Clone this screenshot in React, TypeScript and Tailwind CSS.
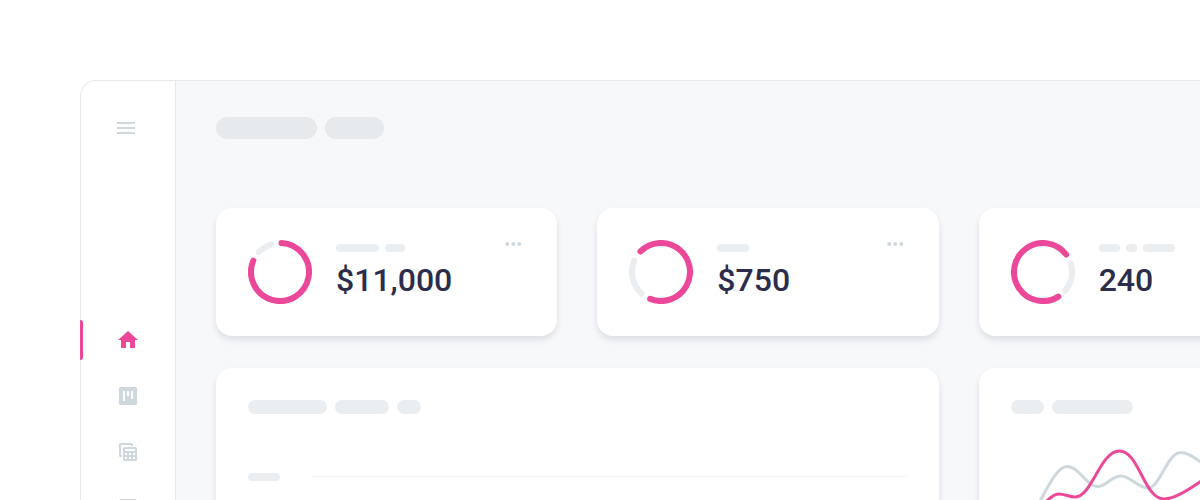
import type { ReactNode } from 'react';
import { MdHome, MdMenu } from 'react-icons/md';

type Arc = [start: number, end: number];

interface Metric {
  value: string;
  bars: string[];
  pink: Arc;
  gray: Arc;
}

const metrics: Metric[] = [
  { value: '$11,000', bars: ['w-[43px]', 'w-5'], pink: [3, 293], gray: [313, 343] },
  { value: '$750', bars: ['w-8'], pink: [-45, 202], gray: [222, 293] },
  { value: '240', bars: ['w-[21px]', 'w-[11px]', 'w-8'], pink: [148, 413], gray: [73, 130] },
];

// Angles are in degrees, clockwise from twelve o'clock.
function arcPath([start, end]: Arc) {
  const at = (deg: number) => {
    const a = (deg * Math.PI) / 180;
    return `${32 + 29 * Math.sin(a)} ${32 - 29 * Math.cos(a)}`;
  };
  return `M${at(start)}A29 29 0 ${end - start > 180 ? 1 : 0} 1 ${at(end)}`;
}

function Ring({ pink, gray }: { pink: Arc; gray: Arc }) {
  return (
    <svg className="size-16 shrink-0" viewBox="0 0 64 64" fill="none" strokeWidth="6" strokeLinecap="round" aria-hidden="true">
      <path d={arcPath(gray)} stroke="#eaeef1" />
      <path d={arcPath(pink)} stroke="#ec4899" />
    </svg>
  );
}

function Pills({ widths, className }: { widths: string[]; className: string }) {
  return (
    <div className="flex gap-2">
      {widths.map((w, i) => (
        <span key={i} className={`rounded-full ${className} ${w}`} />
      ))}
    </div>
  );
}

const surface = 'rounded-2xl bg-white shadow-[0_4px_6px_rgba(45,48,80,0.12)]';

function MetricCard({ value, bars, pink, gray }: Metric) {
  return (
    <article className={`flex items-center gap-6 p-8 ${surface}`}>
      <Ring pink={pink} gray={gray} />
      <div className="flex flex-1 flex-col gap-2">
        <div className="flex gap-[6px]">
          {bars.map((w, i) => (
            <span key={i} className={`h-2 rounded-full bg-[#eaeef1] ${w}`} />
          ))}
        </div>
        <p className="text-[32px] leading-10 font-medium text-[#2b2d4a]">{value}</p>
      </div>
      <button type="button" aria-label="More options" className="-mt-2 self-start">
        <svg className="size-6" viewBox="0 0 24 24" fill="#cfd8dc" aria-hidden="true">
          <circle cx="6.300" cy="12" r="2" />
          <circle cx="12.300" cy="12" r="2" />
          <circle cx="18.300" cy="12" r="2" />
        </svg>
      </button>
    </article>
  );
}

function NavItem({ label, active = false, children }: { label: string; active?: boolean; children: ReactNode }) {
  return (
    <a
      href="#"
      aria-label={label}
      className={`relative flex h-10 items-center justify-center ${active ? 'text-[#ec4899]' : 'text-[#cfd8dc]'}`}
    >
      {active && <span className="absolute inset-y-0 -left-px w-[3px] rounded-r-[3px] bg-[#ec4899]" />}
      {children}
    </a>
  );
}

function BoardIcon() {
  return (
    <svg className="size-6" viewBox="0 0 24 24" fill="currentColor" fillRule="evenodd" aria-hidden="true">
      <path d="M4.500 3h15A1.500 1.500 0 0 1 21 4.500v15a1.500 1.500 0 0 1-1.500 1.500h-15A1.500 1.500 0 0 1 3 19.500v-15A1.500 1.500 0 0 1 4.500 3zM7 7v10h2V7zM11 7v5h2V7zM15 7v8h2V7z" />
    </svg>
  );
}

function SheetsIcon() {
  return (
    <svg className="size-6" viewBox="0 0 24 24" fill="currentColor" fillRule="evenodd" aria-hidden="true">
      <path d="M4.500 3h11A1.500 1.500 0 0 1 17 4.500V6h-2V5H5v10h1v2H4.500A1.500 1.500 0 0 1 3 15.500v-11A1.500 1.500 0 0 1 4.500 3z" />
      <path d="M8.500 7h11A1.500 1.500 0 0 1 21 8.500v11a1.500 1.500 0 0 1-1.500 1.500h-11A1.500 1.500 0 0 1 7 19.500v-11A1.500 1.500 0 0 1 8.500 7zM9 9v2h10V9zM9 13v2h2v-2zM13 13v2h2v-2zM17 13v2h2v-2zM9 17v2h2v-2zM13 17v2h2v-2zM17 17v2h2v-2z" />
    </svg>
  );
}

function PageIcon() {
  return (
    <svg className="size-6" viewBox="0 0 24 24" fill="currentColor" aria-hidden="true">
      <path d="M5 3h14a2 2 0 0 1 2 2v14a2 2 0 0 1-2 2H5a2 2 0 0 1-2-2V5a2 2 0 0 1 2-2z" />
    </svg>
  );
}

function TrendChart() {
  return (
    <svg className="h-40 w-[277px]" viewBox="0 0 277 160" fill="none" strokeWidth="3" strokeLinecap="round" aria-hidden="true">
      <path
        d="M17 79C28 70 42 26.500 56 26.500C68 26.500 76 46.500 86 46.500C96 46.500 100 36 110 36C119 36 127 48 137 48C149 48 156 12.500 170 12.500C179 12.500 187 21 199 28C216 38 230 60 260 50"
        stroke="#cfd8dc"
      />
      <path
        d="M17 79C30 69 39 54 48 54C54 54 58 57 64 57C81 57 89 11 108.500 11C128 11 133 59 153 59C166 59 182 46 198 36C217 24 236 20 260 30"
        stroke="#ec4899"
      />
    </svg>
  );
}

export default function App() {
  return (
    <div className="h-screen overflow-hidden bg-white pt-20 pl-20 font-['Roboto',sans-serif]">
      <div className="-mr-40 flex min-h-full rounded-tl-2xl border-t border-l border-[#e8e9eb]">
        <aside className="flex w-[95px] shrink-0 flex-col rounded-tl-2xl border-r border-[#e8e9eb] bg-white pt-[35px]">
          <button type="button" aria-label="Open menu" className="flex justify-center pr-1 text-[#cfd8dc]">
            <MdMenu className="size-6" />
          </button>
          <nav className="mt-[180px] flex flex-col gap-4">
            <NavItem label="Home" active>
              <MdHome className="size-6" />
            </NavItem>
            <NavItem label="Board">
              <BoardIcon />
            </NavItem>
            <NavItem label="Sheets">
              <SheetsIcon />
            </NavItem>
            <NavItem label="Pages">
              <PageIcon />
            </NavItem>
          </nav>
        </aside>

        <main className="min-w-0 flex-1 bg-[#f7f8fa] px-10 pt-9 pb-10">
          <Pills widths={['w-[101px]', 'w-[59px]']} className="h-[22px] bg-[#e6eaec]" />
          <div className="mt-[69px] grid grid-cols-3 gap-x-10 gap-y-8">
            {metrics.map((m) => (
              <MetricCard key={m.value} {...m} />
            ))}
            <section className={`col-span-2 p-8 ${surface}`}>
              <Pills widths={['w-[79px]', 'w-[54px]', 'w-6']} className="h-[14px] bg-[#eaeef1]" />
              <div className="mt-[59px] flex items-center gap-8">
                <span className="h-2 w-8 rounded-full bg-[#eaeef1]" />
                <span className="h-[2px] flex-1 border-t border-[#f1f2f3]" />
              </div>
            </section>
            <section className={`p-8 ${surface}`}>
              <Pills widths={['w-[33px]', 'w-[81px]']} className="h-[14px] bg-[#eaeef1]" />
              <div className="mt-[26px]">
                <TrendChart />
              </div>
            </section>
          </div>
        </main>
      </div>
    </div>
  );
}
